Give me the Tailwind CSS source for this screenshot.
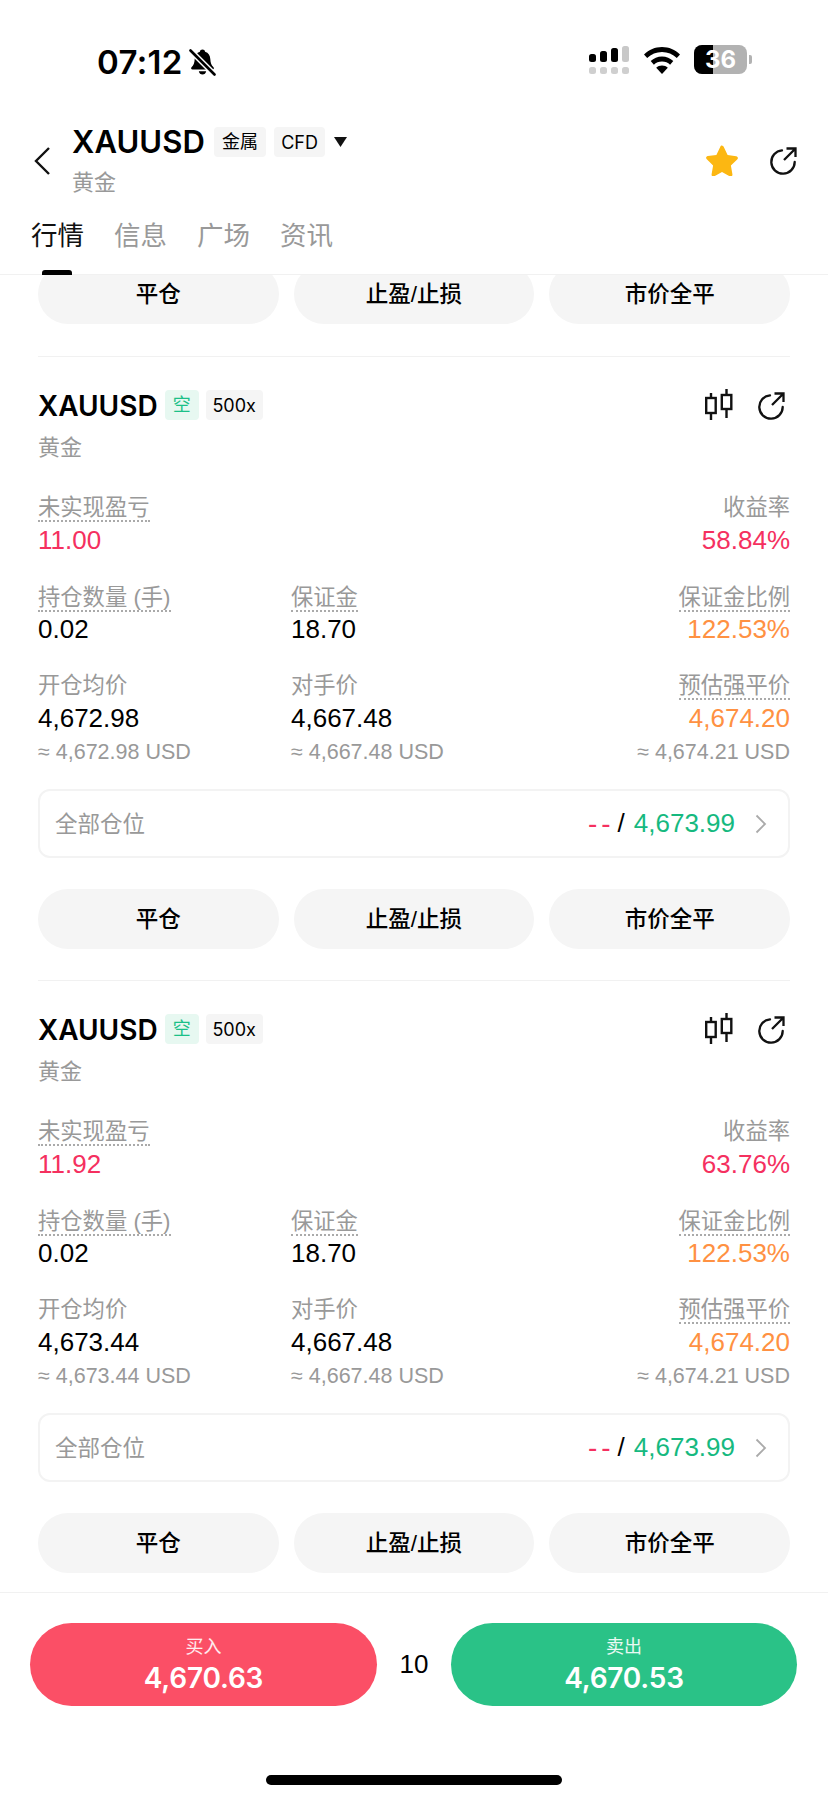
<!DOCTYPE html>
<html lang="zh-CN">
<head>
<meta charset="utf-8">
<script src="https://cdn.jsdelivr.net/npm/@tailwindcss/browser@4"></script>
</head>
<body class="bg-white">
<div class="w-[828px] h-[1800px] flex flex-col overflow-hidden bg-white text-black font-['Liberation_Sans','Noto_Sans_CJK_SC',sans-serif]">
  <!-- status bar -->
  <div class="h-[125px] shrink-0 flex items-start pt-[46px] pl-[97px] pr-[76px]">
    <span class="font-['Inter'] text-[33px] leading-[32px] font-semibold tracking-[0.3px]">07:12</span>
    <svg class="ml-[6px] mt-[2px]" width="27" height="28" viewBox="0 0 27 28"><path d="M13.5 1.5c1.4 0 2.4.9 2.6 2.2 3.4 1 5 3.8 5.2 7.2.2 4 1.200 6.300 3.200 8.300.8.900.3 2.300-1 2.300H3.500c-1.300 0-1.800-1.400-1-2.300 2-2 3-4.300 3.200-8.300.2-3.400 1.800-6.200 5.200-7.200.2-1.300 1.200-2.200 2.600-2.200z" fill="#000"/><path d="M9.800 23.200h7.400c-.3 2-1.800 3.300-3.700 3.300s-3.400-1.300-3.700-3.300z" fill="#000"/><path d="M2 3l23 23" stroke="#fff" stroke-width="5.500"/><path d="M1.500 2.500l24 24" stroke="#000" stroke-width="2.600" stroke-linecap="round"/></svg>
    <div class="ml-auto flex items-start -mt-px">
      <svg width="40" height="30" viewBox="0 0 40 30"><rect x="0" y="9" width="7" height="8" rx="2.500" fill="#000"/><rect x="11" y="6" width="7" height="11" rx="2.500" fill="#000"/><rect x="22" y="3" width="7" height="14" rx="2.500" fill="#000"/><rect x="33" y="1" width="7" height="16" rx="2.500" fill="#c8c8c8"/><rect x="0" y="22" width="7" height="7" rx="2.500" fill="#cfcfcf"/><rect x="11" y="22" width="7" height="7" rx="2.500" fill="#cfcfcf"/><rect x="22" y="22" width="7" height="7" rx="2.500" fill="#cfcfcf"/><rect x="33" y="22" width="7" height="7" rx="2.500" fill="#cfcfcf"/></svg>
      <svg class="ml-[15px] mt-[2px]" width="36" height="27" viewBox="0 0 36 27"><path d="M18 0C11 0 5 2.700 0 7.500l3.200 3.600C7.200 7.200 12.300 5 18 5s10.800 2.200 14.800 6.100L36 7.500C31 2.700 25 0 18 0z" fill="#000"/><path d="M18 9.500c-4.400 0-8.300 1.700-11.300 4.600l3.200 3.600c2.100-2 4.900-3.200 8.100-3.200s6 1.200 8.100 3.200l3.200-3.600C26.300 11.200 22.400 9.500 18 9.500z" fill="#000"/><path d="M18 18.500c-2.300 0-4.300.9-5.800 2.300L18 27l5.800-6.200c-1.500-1.400-3.500-2.300-5.800-2.300z" fill="#000"/></svg>
      <div class="ml-[14px] flex items-center">
        <div class="relative w-[53px] h-[29px] rounded-[8px] overflow-hidden bg-[#b2b2b2] flex items-center justify-center">
          <div class="absolute left-0 top-0 bottom-0 w-[19px] bg-black"></div>
          <span class="relative font-['Inter'] text-white text-[24px] leading-[29px] font-bold">36</span>
        </div>
        <div class="ml-[2px] w-[3px] h-[9px] rounded-r-[2px] bg-[#b2b2b2]"></div>
      </div>
    </div>
  </div>

  <!-- header -->
  <div class="h-[150px] shrink-0 border-b border-[#f1f1f1] relative z-10 bg-white">
    <div class="flex items-center h-[73px] pl-[34px] pr-[31px]">
      <svg class="-mt-[2px]" width="16" height="28" viewBox="0 0 16 28" fill="none"><path d="M15 1L2 14l13 13" stroke="#111" stroke-width="2.400"/></svg>
      <div class="ml-[22px] flex flex-col">
        <div class="flex items-center h-[34px]">
          <span class="font-['Inter'] text-[31px] leading-[34px] font-semibold tracking-[0.1px]">XAUUSD</span>
          <span class="ml-[9px] w-[52px] h-[30px] rounded-[4px] bg-[#f5f5f5] flex items-center justify-center text-[18px]">金属</span>
          <span class="ml-[8px] w-[51px] h-[30px] rounded-[4px] bg-[#f5f5f5] flex items-center justify-center font-['Inter'] text-[18px]">CFD</span>
          <svg class="ml-[9px]" width="13" height="10" viewBox="0 0 13 10"><path d="M0 0h13L6.500 10z" fill="#111"/></svg>
        </div>
        <div class="mt-[9px] h-[30px] text-[22px] leading-[30px] text-[#999]">黄金</div>
      </div>
      <svg class="ml-auto -mt-[2px]" width="32" height="31" viewBox="0 0 32 31"><path d="M16 0.800c.9 0 1.400.5 1.800 1.300l3.800 8 8.600 1.200c1.700.3 2.300 2 1 3.200l-6.300 6.100 1.500 8.700c.3 1.700-1.300 2.800-2.700 2l-7.700-4.200-7.700 4.200c-1.400.8-3-.3-2.700-2l1.500-8.700L.8 14.300c-1.300-1.200-.7-2.900 1-3.200l8.600-1.200 3.800-8c.4-.8.900-1.300 1.800-1.300z" fill="#fcb712"/></svg>
      <svg class="ml-[31px] -mt-[2px]" width="28" height="28" viewBox="0 0 28 28" fill="none"><path d="M13 3.300A11.700 11.700 0 1 0 25.700 15" stroke="#111" stroke-width="2.300" stroke-linecap="round"/><path d="M15 13L26 2M17.500 1.500H26.500V10" stroke="#111" stroke-width="2.300"/></svg>
    </div>
    <div class="mt-[20px] pl-[31px] flex gap-[30px] text-[26.500px] leading-[36px] text-[#999]">
      <span class="text-[#111]">行情</span><span>信息</span><span>广场</span><span>资讯</span>
    </div>
    <div class="absolute left-[42px] bottom-[-1px] w-[30px] h-[5px] rounded-t-[3px] bg-black"></div>
  </div>

  <!-- scrolling content -->
  <div class="flex-1 min-h-0 overflow-hidden px-[38px]">
    <div class="grid grid-cols-3 gap-x-[15px] mt-[-11px] text-[22.500px] font-medium">
      <div class="h-[60px] pt-[2px] rounded-[30px] bg-[#f5f5f5] flex items-center justify-center">平仓</div>
      <div class="h-[60px] pt-[2px] rounded-[30px] bg-[#f5f5f5] flex items-center justify-center">止盈/止损</div>
      <div class="h-[60px] pt-[2px] rounded-[30px] bg-[#f5f5f5] flex items-center justify-center">市价全平</div>
    </div>

    <!-- card 1 -->
    <div class="mt-[32px] border-t border-[#f1f1f1] pt-[33px]">
      <div class="flex items-center h-[30px]">
        <span class="font-['Inter'] text-[28px] leading-[30px] font-semibold mt-[2px]">XAUUSD</span>
        <span class="ml-[7px] w-[34px] h-[30px] rounded-[4px] bg-[#e7f8f1] text-[#1bc088] flex items-center justify-center text-[18px]">空</span>
        <span class="ml-[7px] w-[57px] h-[30px] rounded-[4px] bg-[#f5f5f5] flex items-center justify-center font-['Inter'] text-[18px]">500x</span>
        <svg class="ml-auto" width="28" height="32" viewBox="0 0 28 32" fill="none" stroke="#111" stroke-width="2.400"><rect x="1.200" y="9" width="9.500" height="15"/><path d="M6 4v5M6 24v7"/><rect x="16.800" y="6" width="9.500" height="14"/><path d="M21.500 0v6M21.500 20v9"/></svg>
        <svg class="ml-[24px] mr-[5px] mt-[2px]" width="28" height="28" viewBox="0 0 28 28" fill="none"><path d="M13 3.300A11.700 11.700 0 1 0 25.700 15" stroke="#111" stroke-width="2.300" stroke-linecap="round"/><path d="M15 13L26 2M17.500 1.500H26.500V10" stroke="#111" stroke-width="2.300"/></svg>
      </div>
      <div class="mt-[13px] h-[30px] text-[22px] leading-[30px] text-[#999]">黄金</div>

      <div class="mt-[30px] flex justify-between">
        <div class="flex flex-col items-start">
          <span class="h-[29px] text-[22.300px] leading-[30px] text-[#999] border-b-2 border-dotted border-[#aaa]">未实现盈亏</span>
          <span class="mt-[3px] h-[30px] text-[26px] leading-[30px] text-[#f5305f]">11.00</span>
        </div>
        <div class="flex flex-col items-end">
          <span class="h-[29px] text-[22.300px] leading-[30px] text-[#999]">收益率</span>
          <span class="mt-[3px] h-[30px] text-[26px] leading-[30px] text-[#f5305f]">58.84%</span>
        </div>
      </div>

      <div class="mt-[28px] grid grid-cols-[253px_1fr_auto]">
        <div class="flex flex-col items-start">
          <span class="h-[29px] text-[22.300px] leading-[30px] text-[#999] border-b-2 border-dotted border-[#aaa]">持仓数量 (手)</span>
          <span class="mt-[2px] h-[30px] text-[26px] leading-[30px]">0.02</span>
        </div>
        <div class="flex flex-col items-start">
          <span class="h-[29px] text-[22.300px] leading-[30px] text-[#999] border-b-2 border-dotted border-[#aaa]">保证金</span>
          <span class="mt-[2px] h-[30px] text-[26px] leading-[30px]">18.70</span>
        </div>
        <div class="flex flex-col items-end">
          <span class="h-[29px] text-[22.300px] leading-[30px] text-[#999] border-b-2 border-dotted border-[#aaa]">保证金比例</span>
          <span class="mt-[2px] h-[30px] text-[26px] leading-[30px] text-[#ff9142]">122.53%</span>
        </div>
      </div>

      <div class="mt-[27px] grid grid-cols-[253px_1fr_auto]">
        <div class="flex flex-col items-start">
          <span class="h-[29px] text-[22.300px] leading-[30px] text-[#999]">开仓均价</span>
          <span class="mt-[3px] h-[30px] text-[26px] leading-[30px]">4,672.98</span>
          <span class="mt-[4px] h-[30px] text-[21.500px] leading-[30px] text-[#999]">≈ 4,672.98 USD</span>
        </div>
        <div class="flex flex-col items-start">
          <span class="h-[29px] text-[22.300px] leading-[30px] text-[#999]">对手价</span>
          <span class="mt-[3px] h-[30px] text-[26px] leading-[30px]">4,667.48</span>
          <span class="mt-[4px] h-[30px] text-[21.500px] leading-[30px] text-[#999]">≈ 4,667.48 USD</span>
        </div>
        <div class="flex flex-col items-end">
          <span class="h-[29px] text-[22.300px] leading-[30px] text-[#999] border-b-2 border-dotted border-[#aaa]">预估强平价</span>
          <span class="mt-[3px] h-[30px] text-[26px] leading-[30px] text-[#ff9142]">4,674.20</span>
          <span class="mt-[4px] h-[30px] text-[21.500px] leading-[30px] text-[#999]">≈ 4,674.21 USD</span>
        </div>
      </div>

      <div class="mt-[22px] h-[69px] rounded-[12px] border-2 border-[#f3f3f3] flex items-center pl-[15px] pr-[21px]">
        <span class="text-[22.500px] text-[#999] mt-[2px]">全部仓位</span>
        <span class="ml-auto text-[28px] font-medium text-[#f5305f] tracking-[4px]">--</span>
        <span class="ml-[3px] text-[26px]">/</span>
        <span class="ml-[9px] text-[26px] text-[#16b97f]">4,673.99</span>
        <svg class="ml-[20px]" width="12" height="20" viewBox="0 0 12 20" fill="none"><path d="M1.500 1.500L10 10l-8.500 8.500" stroke="#aaa" stroke-width="1.800"/></svg>
      </div>

      <div class="grid grid-cols-3 gap-x-[15px] mt-[31px] text-[22.500px] font-medium">
        <div class="h-[60px] pt-[2px] rounded-[30px] bg-[#f5f5f5] flex items-center justify-center">平仓</div>
        <div class="h-[60px] pt-[2px] rounded-[30px] bg-[#f5f5f5] flex items-center justify-center">止盈/止损</div>
        <div class="h-[60px] pt-[2px] rounded-[30px] bg-[#f5f5f5] flex items-center justify-center">市价全平</div>
      </div>
    </div>

    <!-- card 2 -->
    <div class="mt-[31px] border-t border-[#f1f1f1] pt-[33px]">
      <div class="flex items-center h-[30px]">
        <span class="font-['Inter'] text-[28px] leading-[30px] font-semibold mt-[2px]">XAUUSD</span>
        <span class="ml-[7px] w-[34px] h-[30px] rounded-[4px] bg-[#e7f8f1] text-[#1bc088] flex items-center justify-center text-[18px]">空</span>
        <span class="ml-[7px] w-[57px] h-[30px] rounded-[4px] bg-[#f5f5f5] flex items-center justify-center font-['Inter'] text-[18px]">500x</span>
        <svg class="ml-auto" width="28" height="32" viewBox="0 0 28 32" fill="none" stroke="#111" stroke-width="2.400"><rect x="1.200" y="9" width="9.500" height="15"/><path d="M6 4v5M6 24v7"/><rect x="16.800" y="6" width="9.500" height="14"/><path d="M21.500 0v6M21.500 20v9"/></svg>
        <svg class="ml-[24px] mr-[5px] mt-[2px]" width="28" height="28" viewBox="0 0 28 28" fill="none"><path d="M13 3.300A11.700 11.700 0 1 0 25.700 15" stroke="#111" stroke-width="2.300" stroke-linecap="round"/><path d="M15 13L26 2M17.500 1.500H26.500V10" stroke="#111" stroke-width="2.300"/></svg>
      </div>
      <div class="mt-[13px] h-[30px] text-[22px] leading-[30px] text-[#999]">黄金</div>

      <div class="mt-[30px] flex justify-between">
        <div class="flex flex-col items-start">
          <span class="h-[29px] text-[22.300px] leading-[30px] text-[#999] border-b-2 border-dotted border-[#aaa]">未实现盈亏</span>
          <span class="mt-[3px] h-[30px] text-[26px] leading-[30px] text-[#f5305f]">11.92</span>
        </div>
        <div class="flex flex-col items-end">
          <span class="h-[29px] text-[22.300px] leading-[30px] text-[#999]">收益率</span>
          <span class="mt-[3px] h-[30px] text-[26px] leading-[30px] text-[#f5305f]">63.76%</span>
        </div>
      </div>

      <div class="mt-[28px] grid grid-cols-[253px_1fr_auto]">
        <div class="flex flex-col items-start">
          <span class="h-[29px] text-[22.300px] leading-[30px] text-[#999] border-b-2 border-dotted border-[#aaa]">持仓数量 (手)</span>
          <span class="mt-[2px] h-[30px] text-[26px] leading-[30px]">0.02</span>
        </div>
        <div class="flex flex-col items-start">
          <span class="h-[29px] text-[22.300px] leading-[30px] text-[#999] border-b-2 border-dotted border-[#aaa]">保证金</span>
          <span class="mt-[2px] h-[30px] text-[26px] leading-[30px]">18.70</span>
        </div>
        <div class="flex flex-col items-end">
          <span class="h-[29px] text-[22.300px] leading-[30px] text-[#999] border-b-2 border-dotted border-[#aaa]">保证金比例</span>
          <span class="mt-[2px] h-[30px] text-[26px] leading-[30px] text-[#ff9142]">122.53%</span>
        </div>
      </div>

      <div class="mt-[27px] grid grid-cols-[253px_1fr_auto]">
        <div class="flex flex-col items-start">
          <span class="h-[29px] text-[22.300px] leading-[30px] text-[#999]">开仓均价</span>
          <span class="mt-[3px] h-[30px] text-[26px] leading-[30px]">4,673.44</span>
          <span class="mt-[4px] h-[30px] text-[21.500px] leading-[30px] text-[#999]">≈ 4,673.44 USD</span>
        </div>
        <div class="flex flex-col items-start">
          <span class="h-[29px] text-[22.300px] leading-[30px] text-[#999]">对手价</span>
          <span class="mt-[3px] h-[30px] text-[26px] leading-[30px]">4,667.48</span>
          <span class="mt-[4px] h-[30px] text-[21.500px] leading-[30px] text-[#999]">≈ 4,667.48 USD</span>
        </div>
        <div class="flex flex-col items-end">
          <span class="h-[29px] text-[22.300px] leading-[30px] text-[#999] border-b-2 border-dotted border-[#aaa]">预估强平价</span>
          <span class="mt-[3px] h-[30px] text-[26px] leading-[30px] text-[#ff9142]">4,674.20</span>
          <span class="mt-[4px] h-[30px] text-[21.500px] leading-[30px] text-[#999]">≈ 4,674.21 USD</span>
        </div>
      </div>

      <div class="mt-[22px] h-[69px] rounded-[12px] border-2 border-[#f3f3f3] flex items-center pl-[15px] pr-[21px]">
        <span class="text-[22.500px] text-[#999] mt-[2px]">全部仓位</span>
        <span class="ml-auto text-[28px] font-medium text-[#f5305f] tracking-[4px]">--</span>
        <span class="ml-[3px] text-[26px]">/</span>
        <span class="ml-[9px] text-[26px] text-[#16b97f]">4,673.99</span>
        <svg class="ml-[20px]" width="12" height="20" viewBox="0 0 12 20" fill="none"><path d="M1.500 1.500L10 10l-8.500 8.500" stroke="#aaa" stroke-width="1.800"/></svg>
      </div>

      <div class="grid grid-cols-3 gap-x-[15px] mt-[31px] text-[22.500px] font-medium">
        <div class="h-[60px] pt-[2px] rounded-[30px] bg-[#f5f5f5] flex items-center justify-center">平仓</div>
        <div class="h-[60px] pt-[2px] rounded-[30px] bg-[#f5f5f5] flex items-center justify-center">止盈/止损</div>
        <div class="h-[60px] pt-[2px] rounded-[30px] bg-[#f5f5f5] flex items-center justify-center">市价全平</div>
      </div>
    </div>
  </div>

  <!-- footer -->
  <div class="h-[208px] shrink-0 border-t border-[#f1f1f1] flex flex-col items-center">
    <div class="mt-[30px] w-full pl-[30px] pr-[31px] flex items-center">
      <div class="w-[347px] h-[83px] rounded-[42px] bg-[#fb4f66] text-white flex flex-col items-center justify-center">
        <span class="text-[18px] leading-[26px] text-white/90">买入</span>
        <span class="font-['Inter'] text-[28px] leading-[36px] font-semibold tracking-[-0.2px]">4,670.63</span>
      </div>
      <span class="flex-1 text-center text-[26px]">10</span>
      <div class="w-[346px] h-[83px] rounded-[42px] bg-[#2ac287] text-white flex flex-col items-center justify-center">
        <span class="text-[18px] leading-[26px] text-white/90">卖出</span>
        <span class="font-['Inter'] text-[28px] leading-[36px] font-semibold tracking-[-0.2px]">4,670.53</span>
      </div>
    </div>
    <div class="mt-[69px] w-[296px] h-[10px] rounded-[5px] bg-black"></div>
  </div>
</div>
</body>
</html>
